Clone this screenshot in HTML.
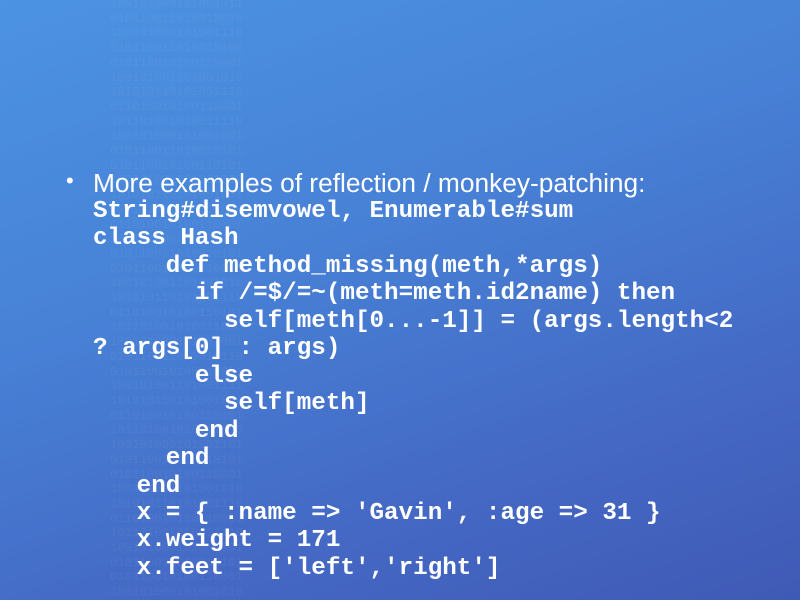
<!DOCTYPE html>
<html><head><style>
html,body{margin:0;padding:0}
body{width:800px;height:600px;overflow:hidden;position:relative;
background:linear-gradient(160deg,#4c93e3 0%,#4781d6 40%,#4468c4 75%,#3f5ab5 100%);}
#bin{position:absolute;left:110px;top:-3px;font-family:"Liberation Mono",monospace;font-size:12.3px;line-height:14.7px;color:rgba(255,255,255,0.05);white-space:pre}
#h{position:absolute;left:93px;top:168px;font-family:"Liberation Sans",sans-serif;font-size:26.3px;color:#fff;white-space:nowrap}
#b{position:absolute;left:66px;top:168px;font-family:"Liberation Sans",sans-serif;font-size:22px;color:#fff}
#code{position:absolute;left:93px;top:198px;font-family:"Liberation Mono",monospace;font-weight:bold;font-size:24.25px;line-height:27.45px;color:#fff;white-space:pre;margin:0}
</style></head><body>
<div id="bin">100101000101001011
010110011010010010
100101000101001110
010110011010010100
010110010100110001
100101001101001010
101010110101001110
011010010100110001
101101001010011110
100101000101001001
010110011010010101
010110010100110101
100101001101001010
101010110101001001
101101001010011010
011010010100110001
100101000101001101
010110011010010101
010110010100110001
100101001101001010
101010110101001110
011010010100110101
101101001010011000
100101000101001001
010110011010010110
010110010100110001
100101001101001111
101010110101001010
011010010100110101
101101001010011010
100101000101001101
010110011010010101
010110010100110001
100101001101001010
101010110101001110
011010010100110001
101101001010011110
100101000101001001
010110011010010101
010110010100110001
100101000101001010</div>
<div id="b">•</div>
<div id="h">More examples of reflection / monkey-patching:</div>
<pre id="code">String#disemvowel, Enumerable#sum
class Hash
     def method_missing(meth,*args)
       if /=$/=~(meth=meth.id2name) then
         self[meth[0...-1]] = (args.length&lt;2
? args[0] : args)
       else
         self[meth]
       end
     end
   end
   x = { :name =&gt; 'Gavin', :age =&gt; 31 }
   x.weight = 171
   x.feet = ['left','right']</pre>
</body></html>
